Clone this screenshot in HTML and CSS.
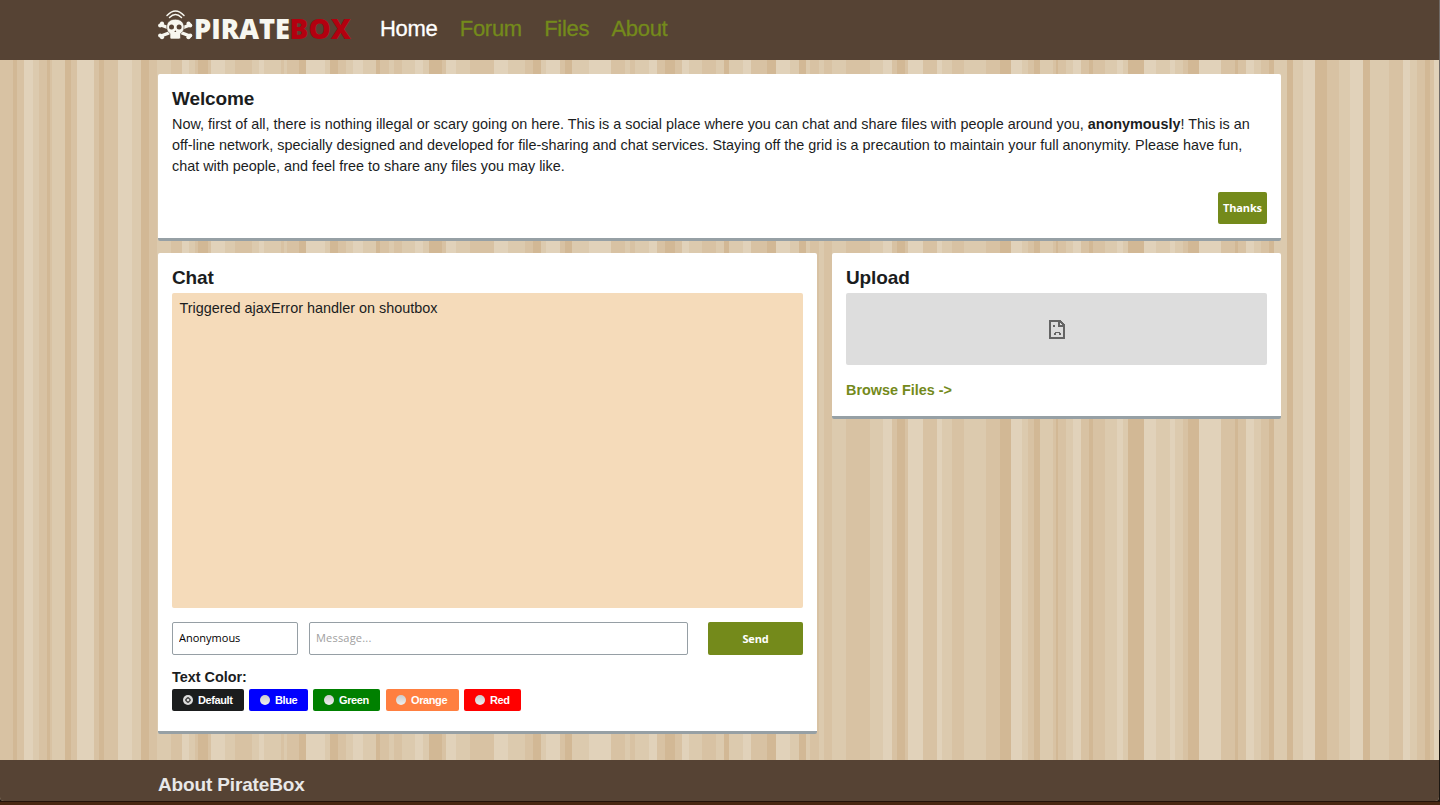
FILE: index.html
```html
<!DOCTYPE html>
<html lang="en">
<head>
<meta charset="utf-8">
<title>PirateBox</title>
<link rel="stylesheet" href="styles.css">
</head>
<body>
<div class="window">
  <header class="topbar">
    <div class="container topbar-inner">
      <svg class="logo" width="198" height="44" viewBox="0 0 198 44" role="img" aria-label="PirateBox">
        <g fill="none" stroke="#f7f7f0" stroke-linecap="round">
          <path d="M9 9.500Q17.500 .500 26 9.500M11.500 11.500Q17.500 5.500 23.500 11.500" stroke-width="1.500"/>
          <path d="M3 19L32 30M32 19L3 30" stroke-width="3.400"/>
        </g>
        <g fill="#f7f7f0">
          <circle cx="2.200" cy="19.500" r="2.100"/><circle cx="4" cy="17.700" r="2.100"/><circle cx="32.200" cy="19.500" r="2.100"/><circle cx="30.500" cy="17.700" r="2.100"/>
          <circle cx="2.200" cy="29.500" r="2.100"/><circle cx="4" cy="31.200" r="2.100"/><circle cx="32.200" cy="29.500" r="2.100"/><circle cx="30.500" cy="31.200" r="2.100"/>
          <path d="M17.300 13.200C12 13.200 8.700 16.500 8.700 21C8.700 24.500 10 26.500 12 27.500V31.500Q12 33 13.500 33H21Q22.500 33 22.500 31.500V27.500C24.600 26.500 26 24.500 26 21C26 16.500 22.600 13.200 17.300 13.200Z" stroke="#564334" stroke-width=".6"/>
        </g>
        <circle cx="13.500" cy="21" r="2.500" fill="#564334"/><circle cx="21.100" cy="21" r="2.500" fill="#564334"/>
        <path d="M17.300 24.300L16.300 26H18.300Z" fill="#564334"/>
        <text class="logo-text" x="36" y="33" textLength="96" lengthAdjust="spacingAndGlyphs" fill="#f7f7f0">PIRATE</text>
        <text class="logo-text" x="131.500" y="33" textLength="61.500" lengthAdjust="spacingAndGlyphs" fill="#b3000f">BOX</text>
      </svg>
      <nav class="nav"><a class="active">Home</a><a>Forum</a><a>Files</a><a>About</a></nav>
    </div>
  </header>
  <main class="container content">
    <section class="card welcome">
      <h2>Welcome</h2>
      <p>Now, first of all, there is nothing illegal or scary going on here. This is a social place where you can chat and share files with people around you, <b>anonymously</b>! This is an<br>off-line network, specially designed and developed for file-sharing and chat services. Staying off the grid is a precaution to maintain your full anonymity. Please have fun,<br>chat with people, and feel free to share any files you may like.</p>
      <button class="button thanks">Thanks</button>
    </section>
    <div class="columns">
      <section class="card chat">
        <h2>Chat</h2>
        <div class="shoutbox">Triggered ajaxError handler on shoutbox</div>
        <div class="send-row">
          <input class="field name" value="Anonymous">
          <input class="field message" placeholder="Message...">
          <button class="button send">Send</button>
        </div>
        <h3>Text Color:</h3>
        <div class="colors">
          <span class="color default"><i class="radio checked"></i>Default</span>
          <span class="color blue"><i class="radio"></i>Blue</span>
          <span class="color green"><i class="radio"></i>Green</span>
          <span class="color orange"><i class="radio"></i>Orange</span>
          <span class="color red"><i class="radio"></i>Red</span>
        </div>
      </section>
      <section class="card upload">
        <h2>Upload</h2>
        <div class="frame">
          <svg width="16" height="19" viewBox="0 0 16 19" shape-rendering="crispEdges">
            <path d="M1 1H11L15 5V18H1Z" fill="none" stroke="#646464" stroke-width="2"/>
            <path d="M9 1H11V5H15V7H9ZM4 5H6V7H4ZM12 5H13V6H12ZM6 12H11V13H6ZM5 13H7V15H5ZM10 13H12V15H10Z" fill="#646464"/>
          </svg>
        </div>
        <a class="browse">Browse Files -&gt;</a>
      </section>
    </div>
  </main>
  <footer class="footer"><div class="container"><h2>About PirateBox</h2></div></footer>
</div>
</body>
</html>
```
FILE: styles.css
```css
* { box-sizing: border-box; }
body {
  margin: 0;
  height: 805px;
  padding: 0 1px 4px 0;
  overflow: hidden;
  background: linear-gradient(#6f6a66 0 730px, #1c1712 730px 801px, #241209 801px 802px, #482712 802px);
  font: 14.4px/21px "Liberation Sans", Arial, sans-serif;
  color: #1b1d1e;
}
.window {
  --l: #e1d2ba;
  --m: #dccaae;
  --t: #d8c2a3;
  --d: #d2b895;
  height: 801px;
  display: flex;
  flex-direction: column;
  overflow: hidden;
  border-radius: 0 0 4px 4px;
  background: linear-gradient(90deg,
    var(--t) 0 13px, var(--d) 13px 17px, var(--t) 17px 24px, var(--l) 24px 33px, var(--m) 33px 39px, var(--t) 39px 47px, var(--d) 47px 50px, var(--t) 50px 52px, var(--m) 52px 65px, var(--d) 65px 71px, var(--t) 71px 77px, var(--l) 77px 94px, var(--t) 94px 99px, var(--d) 99px 104px, var(--t) 104px 118px,
    var(--l) 118px 132px, var(--m) 132px 141px, var(--d) 141px 149px, var(--t) 149px 157px, var(--m) 157px 171px, var(--t) 171px 182px, var(--l) 182px 189px, var(--m) 189px 195px, var(--t) 195px 198px, var(--d) 198px 208px, var(--t) 208px 211px, var(--l) 211px 225px, var(--m) 225px 235px, var(--t) 235px 252px, var(--m) 252px 259px, var(--l) 259px 264px, var(--m) 264px 281px, var(--t) 281px 284px, var(--m) 284px 287px, var(--t) 287px 299px, var(--d) 299px 306px,
    var(--l) 306px 325px, var(--m) 325px 330px, var(--d) 330px 338px, var(--t) 338px 346px, var(--m) 346px 353px, var(--l) 353px 363px, var(--m) 363px 376px, var(--d) 376px 380px, var(--t) 380px 389px, var(--m) 389px 394px, var(--t) 394px 402px, var(--m) 402px 415px, var(--l) 415px 423px, var(--m) 423px 429px, var(--d) 429px 442px, var(--t) 442px 446px, var(--l) 446px 456px, var(--m) 456px 470px, var(--t) 470px 494px,
    var(--l) 494px 508px, var(--m) 508px 525px, var(--t) 525px 533px, var(--d) 533px 541px, var(--m) 541px 546px, var(--l) 546px 560px, var(--t) 560px 565px, var(--d) 565px 572px, var(--m) 572px 589px, var(--l) 589px 611px, var(--t) 611px 625px, var(--m) 625px 630px, var(--t) 630px 635px, var(--m) 635px 649px, var(--l) 649px 657px, var(--t) 657px 665px, var(--d) 665px 675px, var(--t) 675px 682px,
    var(--l) 682px 689px, var(--m) 689px 702px, var(--t) 702px 716px, var(--m) 716px 724px, var(--d) 724px 729px, var(--m) 729px 743px, var(--l) 743px 751px, var(--t) 751px 767px, var(--d) 767px 776px, var(--l) 776px 790px, var(--m) 790px 799px, var(--d) 799px 806px, var(--m) 806px 810px, var(--t) 810px 819px, var(--m) 819px 824px, var(--t) 824px 832px, var(--m) 832px 846px, var(--t) 846px 870px,
    var(--m) 870px 883px, var(--l) 883px 892px, var(--t) 892px 897px, var(--d) 897px 905px, var(--t) 905px 908px, var(--l) 908px 923px, var(--t) 923px 937px, var(--l) 937px 942px, var(--m) 942px 952px, var(--t) 952px 964px,
    var(--m) 964px 986px, var(--t) 986px 1000px, var(--d) 1000px 1011px, var(--l) 1011px 1022px, var(--m) 1022px 1028px, var(--t) 1028px 1034px, var(--d) 1034px 1040px, var(--m) 1040px 1053px, var(--t) 1053px 1056px, var(--d) 1056px 1058px, var(--t) 1058px 1066px, var(--m) 1066px 1073px, var(--l) 1073px 1081px, var(--t) 1081px 1089px, var(--d) 1089px 1093px, var(--t) 1093px 1105px,
    var(--m) 1105px 1117px, var(--l) 1117px 1123px, var(--m) 1123px 1128px, var(--d) 1128px 1144px, var(--l) 1144px 1156px, var(--m) 1156px 1170px, var(--l) 1170px 1175px, var(--m) 1175px 1183px, var(--t) 1183px 1188px, var(--d) 1188px 1199px, var(--l) 1199px 1221px, var(--t) 1221px 1235px, var(--d) 1235px 1238px, var(--t) 1238px 1246px, var(--l) 1246px 1254px, var(--m) 1254px 1261px, var(--t) 1261px 1269px, var(--d) 1269px 1274px, var(--m) 1274px 1287px,
    var(--d) 1287px 1293px, var(--m) 1293px 1303px, var(--l) 1303px 1315px, var(--d) 1315px 1327px, var(--t) 1327px 1339px, var(--m) 1339px 1350px, var(--l) 1350px 1363px, var(--d) 1363px 1370px, var(--m) 1370px 1389px, var(--t) 1389px 1403px, var(--l) 1403px 1410px, var(--m) 1410px 1417px, var(--t) 1417px 1425px, var(--d) 1425px 1430px, var(--t) 1430px 1434px, var(--l) 1434px 1439px);
}
.container { width: 1123px; margin-left: 158px; }
.topbar, .footer { background: #564334; }
.topbar { height: 60px; }
.topbar-inner { display: flex; }
.logo { margin: 6px 24px 0 0; flex: none; overflow: visible; }
.logo-text { font: 800 28px "Open Sans", sans-serif; }
.nav { display: flex; gap: 22.3px; font-size: 22px; line-height: 57px; letter-spacing: -.3px; color: #748a1b; -webkit-text-stroke: .3px; }
.nav .active { color: #fff; }
.content { padding-top: 14px; flex: 1; }
.card { background: #fff; border-radius: 2px; border-bottom: 3px solid #96a0a5; padding: 13px 14px 14px; }
h2 { margin: 0 0 4px; font-size: 19px; line-height: 23px; letter-spacing: -.12px; font-weight: bold; }
p { margin: 0; white-space: nowrap; }
.welcome { height: 167px; display: flex; flex-direction: column; }
.button {
  border: 0;
  border-radius: 2px;
  padding: 0;
  background: #748a1b;
  color: #fff;
  font: bold 11px/32px "Open Sans", sans-serif;
  letter-spacing: -.15px;
}
.thanks { align-self: flex-end; width: 49px; height: 32px; margin-top: 15px; }
.welcome p { padding-top: 0; }
.columns { display: grid; grid-template-columns: 659px 449px; gap: 15px; align-items: start; margin-top: 12px; }
.chat { height: 481px; }
.shoutbox { height: 315px; padding: 5px 7.5px; border-radius: 2px; background: #f5dbba; }
.send-row { display: flex; margin-top: 14px; }
.field { height: 33px; border: 1px solid #969fa5; border-radius: 2px; padding: 0 6px 2px; background: #fff; color: #000; font: 11px "Open Sans", sans-serif; }
.field::placeholder { color: #a0a0a0; opacity: 1; letter-spacing: .2px; }
.name { width: 126px; margin-right: 11px; }
.message { width: 379px; margin-right: 20px; }
.send { width: 95px; height: 33px; }
h3 { margin: 12px 0 1px; font-size: 14.4px; line-height: 21px; }
.colors { display: flex; gap: 5px; }
.color { display: flex; align-items: center; height: 22px; padding-left: 11px; border-radius: 2px; color: #fff; font-size: 11px; font-weight: bold; letter-spacing: -.4px; }
.radio { width: 10px; height: 10px; margin-right: 5px; border-radius: 50%; background: linear-gradient(#ccc, #eee); flex: none; }
.checked { background: radial-gradient(circle, #ddd 0 1px, #555 1.500px 2.500px, #ddd 3px); }
.default { width: 72px; background: #1b1d1e; }
.blue { width: 59px; background: #00f; }
.green { width: 67px; background: #008000; }
.orange { width: 73px; margin-left: 1px; padding-left: 10px; background: #ff7f40; }
.red { width: 57px; background: #f00; }
.upload { height: 166px; }
.frame { height: 72px; border-radius: 2px; background: #ddd; display: flex; align-items: center; justify-content: center; }
.browse { display: block; margin-top: 15px; color: #748a1b; font-weight: bold; }
.footer { height: 41px; padding-top: 13px; }
.footer h2 { color: #e8e8e8; letter-spacing: -.15px; }
```
